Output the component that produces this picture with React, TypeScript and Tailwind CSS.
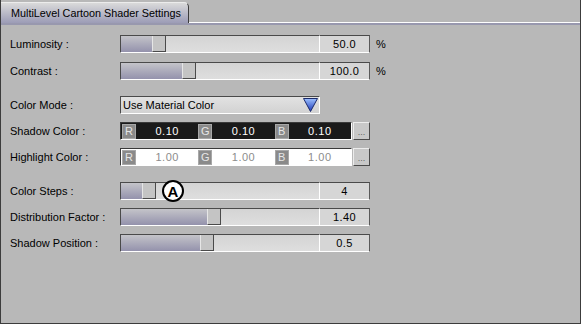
import React from "react";

const font = { fontFamily: '"Liberation Sans", Arial, sans-serif' };

function Label({ text }: { text: string }) {
  return <div className="w-[119px] shrink-0 pl-[9px] text-[11px] text-black leading-none">{text}</div>;
}

function Slider({ fill, value, unit, marker }: { fill: number; value: string; unit?: string; marker?: boolean }) {
  return (
    <div className="flex items-center">
      <div className="relative flex w-[200px] h-[18px] border-t border-l border-t-[#4a4a4a] border-l-[#4a4a4a] border-b border-r border-b-white border-r-white">
        <div className="h-full bg-linear-to-b from-[#c4c4c9] to-[#9492ac]" style={{ width: fill }} />
        <div className="w-[14px] h-full bg-[#c4c4c4] border-l border-l-[#e6e6e6] border-r border-r-[#4a4a4a] border-b border-b-[#4a4a4a]" />
        <div className="flex-1 h-full bg-linear-to-b from-[#d4d4d4] to-[#dedede]" />
        {marker && (
          <div className="absolute left-[41px] top-[-3px] w-[22px] h-[22px] rounded-full bg-white border-[2.5px] border-black flex items-center justify-center">
            <span className="text-[15px] font-bold leading-none text-black" style={font}>A</span>
          </div>
        )}
      </div>
      <div className="w-[50px] h-[18px] bg-[#d6d6d6] border-t border-t-[#4a4a4a] border-r border-r-[#5a5a5a] border-b border-b-white flex items-center justify-center text-[11px] text-black leading-none tracking-[0.4px]">
        {value}
      </div>
      {unit && <div className="ml-[6px] text-[11px] text-black leading-none">{unit}</div>}
    </div>
  );
}

function Letter({ l }: { l: string }) {
  return (
    <div className="w-[14px] h-[15px] bg-[#8a8a8a] border border-[#a8a8a8] flex items-center justify-center text-[11px] leading-none text-[#e6e6e6] shrink-0">
      {l}
    </div>
  );
}

function ColorRow({ dark, v }: { dark: boolean; v: string }) {
  const field = dark
    ? "flex-1 h-full bg-[#1a1a1a] text-white flex items-center justify-center text-[11px] leading-none tracking-[0.5px]"
    : "flex-1 h-full bg-white text-[#8c8c8c] flex items-center justify-center text-[11px] leading-none tracking-[0.5px]";
  return (
    <div className="flex items-center">
      <div className={"flex items-center w-[232px] h-[18px] border-t border-l border-t-[#3a3a3a] border-l-[#3a3a3a] border-b border-r border-b-white border-r-white pl-[1px] " + (dark ? "bg-[#1a1a1a]" : "bg-white")}>
        {["R", "G", "B"].map((l) => (
          <div key={l} className="flex-1 flex items-center h-full">
            <Letter l={l} />
            <div className={field}>{v}</div>
          </div>
        ))}
      </div>
      <div className="ml-[1px] w-[17px] h-[18px] bg-[#c8c8c8] border-t border-l border-t-[#ececec] border-l-[#ececec] border-r border-b border-r-[#4a4a4a] border-b-[#4a4a4a] flex items-end justify-center pb-[2px] text-[9px] leading-none text-[#666]">
        ...
      </div>
    </div>
  );
}

export default function App() {
  return (
    <div className="w-[581px] h-[324px] bg-[#b8b8b8] border-l border-r border-b border-[#3c3c3c] flex flex-col" style={font}>
      <div className="flex h-[23px]">
        <div className="mt-[2px] w-[188px] h-[21px] rounded-tr-[5px] border-t border-t-[#ececec] border-r border-r-[#3c3c3c] bg-linear-to-b from-[#dadada] to-[#9c9cb6] flex items-center pl-[10px] text-[10.8px] text-black leading-none">
          MultiLevel Cartoon Shader Settings
        </div>
        <div className="flex-1 border-b border-b-white" />
      </div>
      <div className="h-[2px] bg-[#9898ae]" />

      <div className="flex flex-col mt-[10px]">
        <div className="flex items-center h-[18px]">
          <Label text="Luminosity :" />
          <Slider fill={31} value="50.0" unit="%" />
        </div>
        <div className="flex items-center h-[18px] mt-[9px]">
          <Label text="Contrast :" />
          <Slider fill={61} value="100.0" unit="%" />
        </div>

        <div className="flex items-center h-[18px] mt-[16px]">
          <Label text="Color Mode :" />
          <div className="flex items-center justify-between w-[200px] h-[18px] border-t border-l border-t-[#4a4a4a] border-l-[#4a4a4a] border-b border-r border-b-white border-r-white bg-linear-to-b from-[#e2e2e2] to-[#d2d2d2] pl-[2px] pr-[1px] text-[11px] text-black leading-none">
            <span>Use Material Color</span>
            <svg width="15" height="14" viewBox="0 0 15 14">
              <defs>
                <linearGradient id="tri" x1="0" y1="0" x2="0" y2="1">
                  <stop offset="0" stopColor="#9cc0ff" />
                  <stop offset="1" stopColor="#1c38b8" />
                </linearGradient>
              </defs>
              <polygon points="0.5,0.5 14.5,0.5 7.5,13.5" fill="url(#tri)" stroke="#1a2a6a" strokeWidth="1" />
            </svg>
          </div>
        </div>
        <div className="flex items-center h-[18px] mt-[8px]">
          <Label text="Shadow Color :" />
          <ColorRow dark v="0.10" />
        </div>
        <div className="flex items-center h-[18px] mt-[8px]">
          <Label text="Highlight Color :" />
          <ColorRow dark={false} v="1.00" />
        </div>

        <div className="flex items-center h-[18px] mt-[16px]">
          <Label text="Color Steps :" />
          <Slider fill={21} value="4" marker />
        </div>
        <div className="flex items-center h-[18px] mt-[8px]">
          <Label text="Distribution Factor :" />
          <Slider fill={86} value="1.40" />
        </div>
        <div className="flex items-center h-[18px] mt-[8px]">
          <Label text="Shadow Position :" />
          <Slider fill={79} value="0.5" />
        </div>
      </div>
    </div>
  );
}
